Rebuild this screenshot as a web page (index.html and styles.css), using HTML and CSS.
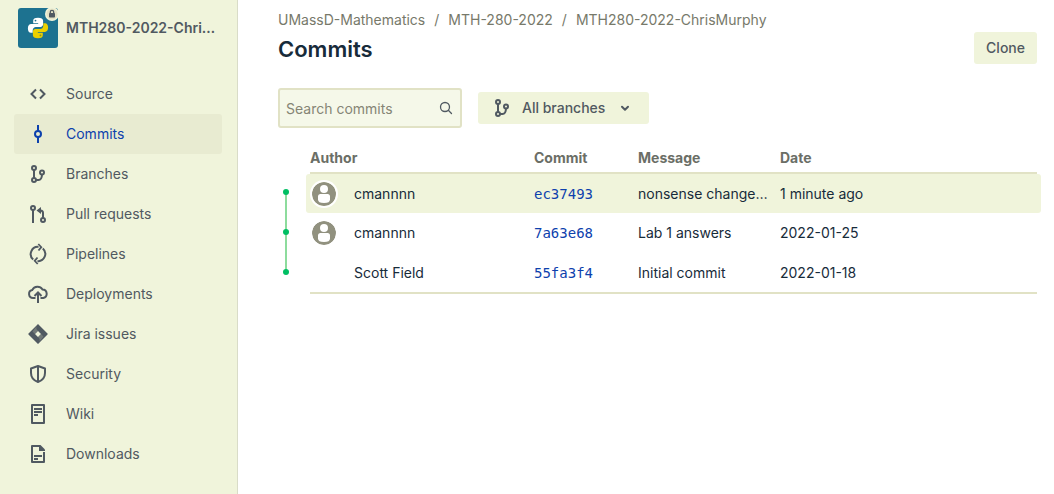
FILE: index.html
```html
<!DOCTYPE html>
<html lang="en">
<head>
<meta charset="utf-8">
<meta name="viewport" content="width=device-width, initial-scale=1">
<title>Commits</title>
<link rel="stylesheet" href="styles.css">
</head>
<body>
<svg class="defs" aria-hidden="true">
  <symbol id="branch" viewBox="0 0 24 24">
    <g fill="none" stroke="currentColor" stroke-width="2"><circle cx="8" cy="6" r="2"/><circle cx="8" cy="18" r="2"/><circle cx="16" cy="10.500" r="2"/><path d="M8 8v8M10 18h2.500q3.300 0 3.500-5.500"/></g>
  </symbol>
  <symbol id="person" viewBox="0 0 24 24">
    <circle cx="12" cy="12" r="12" fill="#91917f"/><circle cx="12" cy="7" r="4" fill="#fff"/><path d="M6 14.500Q6 12 8.500 12h7q2.500 0 2.500 2.500v3Q18 21 12 21T6 17.500z" fill="#fff"/>
  </symbol>
</svg>
<div class="app">
  <aside class="sidebar">
    <a class="repo" href="#">
      <span class="avatar">
        <svg class="avatar-art" viewBox="0 0 40 40" aria-hidden="true">
          <rect width="40" height="40" rx="3" fill="#1d7290"/>
          <path fill="#fff" d="M20 9.800c-3.500 0-4.800 1.200-4.800 3v2.400h5v.9h-7c-2.100 0-3.300 1.600-3.300 4.300s1.200 4.300 3 4.300h1.800v-2.500c0-2 1.500-3.300 3.200-3.300h4.600c1.500 0 2.600-1.200 2.600-2.600v-3.500c0-2-1.800-3-5.100-3z"/>
          <path fill="#ecd000" d="M20 30.200c3.500 0 4.800-1.200 4.800-3v-2.400h-5v-.9h7c2.100 0 3.300-1.600 3.300-4.300s-1.200-4.300-3-4.300h-1.800v2.500c0 2-1.500 3.300-3.200 3.300h-4.600c-1.500 0-2.600 1.200-2.600 2.600v3.500c0 2 1.800 3 5.100 3z"/>
          <circle cx="17.500" cy="12.600" r=".9" fill="#1d7290"/><circle cx="22.500" cy="27.400" r=".9" fill="#8c8f26"/>
        </svg>
        <svg class="lock" viewBox="0 0 14 14" aria-hidden="true"><circle cx="7" cy="7" r="7" fill="#f0f4db"/><circle cx="7" cy="7" r="5.500" fill="#e3e2c5"/><rect x="4" y="6" width="6" height="4.500" rx=".8" fill="#505961"/><path d="M5.300 6.500V5a1.700 1.700 0 0 1 3.400 0v1.500" fill="none" stroke="#505961" stroke-width="1.300"/></svg>
      </span>
      <span class="repo-name">MTH280-2022-Chri…</span>
    </a>
    <nav class="nav" aria-label="Repository">
      <a class="nav-item" href="#"><svg class="icon" viewBox="0 0 24 24"><path d="m10 7.500-4.500 4.500 4.500 4.500M14 7.500l4.500 4.500-4.500 4.500" fill="none" stroke="currentColor" stroke-width="2"/></svg>Source</a>
      <a class="nav-item active" href="#" aria-current="page"><svg class="icon" viewBox="0 0 24 24"><g fill="none" stroke="currentColor" stroke-width="2"><circle cx="12" cy="12" r="3"/><path d="M12 3v6M12 15v6"/></g></svg>Commits</a>
      <a class="nav-item" href="#"><svg class="icon"><use href="#branch"/></svg>Branches</a>
      <a class="nav-item" href="#"><svg class="icon" viewBox="0 0 24 24"><g fill="none" stroke="currentColor" stroke-width="2"><circle cx="7" cy="6" r="2"/><circle cx="17" cy="18" r="2"/><path d="M7 8v13M17 16v-5q0-2.500-2.500-2.500H12.500"/></g><path d="M10.500 8.500 15 5v7z" fill="currentColor"/></svg>Pull requests</a>
      <a class="nav-item" href="#"><svg class="icon" viewBox="0 0 24 24"><path d="M7.200 17.500A7.200 7.200 0 0 1 12.500 4.900M16.800 6.500A7.200 7.200 0 0 1 11.500 19.100" fill="none" stroke="currentColor" stroke-width="2"/><path d="M12.300 2 15.300 5.200 12.500 8.500M11.700 22 8.700 18.800 11.500 15.500" fill="none" stroke="currentColor" stroke-width="1.800"/></svg>Pipelines</a>
      <a class="nav-item" href="#"><svg class="icon" viewBox="0 0 24 24"><path d="M9.500 16H7a4 4 0 0 1-.8-7.900A6 6 0 0 1 16.500 7.500a4.300 4.300 0 0 1 .8 8.500H14.500M12 21v-9.500M8.500 14l3.500-3.500 3.500 3.500" fill="none" stroke="currentColor" stroke-width="2"/></svg>Deployments</a>
      <a class="nav-item" href="#"><svg class="icon" viewBox="0 0 24 24"><path fill="currentColor" fill-rule="evenodd" d="m12 2 9.500 9.500q.5.500 0 1L12 22l-9.500-9.500q-.5-.5 0-1zm0 7-3 3 3 3 3-3z"/><path d="M12 2.500Q8.500 6 12 9l-3 3-2.500-2.500zM12 21.500q3.500-3.500 0-6.500l3-3 2.500 2.500z" fill="#a5aa9b" opacity=".4"/></svg>Jira issues</a>
      <a class="nav-item" href="#"><svg class="icon" viewBox="0 0 24 24"><path d="M12 4 19 6.500V11q0 6.500-7 9-7-2.500-7-9V6.500zM12 4v16" fill="none" stroke="currentColor" stroke-width="2" stroke-linejoin="round"/></svg>Security</a>
      <a class="nav-item" href="#"><svg class="icon" viewBox="0 0 24 24"><path d="M6 3h12v18H6zM8 7h8M8 10h8M8 13h4" fill="none" stroke="currentColor" stroke-width="2" stroke-linejoin="round"/></svg>Wiki</a>
      <a class="nav-item" href="#"><svg class="icon" viewBox="0 0 24 24"><path d="M13 4H6v16h12V10M8 14h8M8 17h4" fill="none" stroke="currentColor" stroke-width="2" stroke-linejoin="round"/><path d="M13 3h1.500L19 7.500V9h-6z" fill="currentColor"/></svg>Downloads</a>
    </nav>
  </aside>
  <main class="main">
    <nav class="crumbs" aria-label="Breadcrumb"><a href="#">UMassD-Mathematics</a><span>/</span><a href="#">MTH-280-2022</a><span>/</span><a href="#">MTH280-2022-ChrisMurphy</a></nav>
    <header class="heading">
      <h1>Commits</h1>
      <button class="button" type="button">Clone</button>
    </header>
    <div class="filters">
      <label class="search"><input type="text" placeholder="Search commits" aria-label="Search commits"><svg class="search-icon" viewBox="0 0 16 16" aria-hidden="true"><g fill="none" stroke="#505961" stroke-width="1.300"><circle cx="7" cy="7" r="4.500"/><path d="m10.300 10.300 3.200 3.200" stroke-linecap="round"/></g></svg></label>
      <button class="button branches" type="button"><svg class="icon"><use href="#branch"/></svg>All branches<svg class="chevron" viewBox="0 0 16 16"><path d="m5 6.800 3 3 3-3" fill="none" stroke="currentColor" stroke-width="2" stroke-linecap="round" stroke-linejoin="round"/></svg></button>
    </div>
    <div class="history">
      <svg class="graph" viewBox="0 0 16 88" aria-hidden="true"><path d="M8 4v80" stroke="#8ddc9d" stroke-width="2"/><g fill="#00bf63"><circle cx="8" cy="4" r="3"/><circle cx="8" cy="44" r="3"/><circle cx="8" cy="84" r="3"/></g></svg>
      <table class="commits">
        <colgroup><col class="col-author"><col class="col-commit"><col class="col-message"><col></colgroup>
        <thead><tr><th scope="col">Author</th><th scope="col">Commit</th><th scope="col">Message</th><th scope="col">Date</th></tr></thead>
        <tbody>
          <tr class="selected"><td><div class="author"><svg class="user ring"><use href="#person"/></svg>cmannnn</div></td><td><a class="hash" href="#">ec37493</a></td><td>nonsense change…</td><td>1 minute ago</td></tr>
          <tr><td><div class="author"><svg class="user"><use href="#person"/></svg>cmannnn</div></td><td><a class="hash" href="#">7a63e68</a></td><td>Lab 1 answers</td><td>2022-01-25</td></tr>
          <tr><td><div class="author"><span class="user"></span>Scott Field</div></td><td><a class="hash" href="#">55fa3f4</a></td><td>Initial commit</td><td>2022-01-18</td></tr>
        </tbody>
      </table>
    </div>
  </main>
</div>
</body>
</html>
```
FILE: styles.css
```css
* { box-sizing: border-box; }
body { margin: 0; background: #fff; color: #172b3a; font: 14px/20px Inter, "Liberation Sans", sans-serif; }
a { text-decoration: none; color: inherit; }
.defs { position: absolute; width: 0; height: 0; }
.app { display: flex; min-height: 100vh; }
.icon { width: 24px; height: 24px; flex: none; }

.sidebar { width: 238px; flex: none; padding: 8px 14px; background: #f0f4db; border-right: 1px solid #d9dcc8; color: #505961; }
.repo { display: flex; align-items: center; gap: 8px; padding-left: 4px; font-weight: 600; }
.avatar { position: relative; width: 40px; height: 40px; flex: none; }
.avatar-art { display: block; width: 40px; height: 40px; }
.lock { position: absolute; top: -1px; right: -1px; width: 14px; height: 14px; }
.repo-name { white-space: nowrap; }
.nav { display: flex; flex-direction: column; margin-top: 26px; }
.nav-item { display: flex; align-items: center; gap: 16px; height: 40px; margin-right: 1px; padding: 0 12px; border-radius: 3px; }
.active { background: #e8ebd1; color: #0d41ad; }

.main { flex: 1; min-width: 0; padding: 10px 17px 24px 40px; }
.crumbs { display: flex; gap: 9px; color: #77796a; }
.heading { display: flex; justify-content: space-between; align-items: center; margin-top: 2px; }
h1 { margin: 0; padding-top: 2px; font-size: 22px; line-height: 30px; font-weight: 600; }
.button { height: 32px; padding: 0 12px; border: 0; border-radius: 3px; background: #f0f4db; color: #505961; font: inherit; font-weight: 500; }
.filters { display: flex; align-items: center; gap: 16px; margin-top: 24px; }
.search { display: flex; align-items: center; width: 184px; height: 40px; padding: 0 6px; border: 2px solid #e1e2c5; border-radius: 3px; background: #f5f8e9; }
.search input { flex: 1; min-width: 0; padding: 2px 0 0; border: 0; outline: 0; background: none; color: inherit; font: inherit; }
.search input::placeholder { color: #858575; opacity: 1; }
.search-icon { width: 16px; height: 16px; }
.branches { display: flex; align-items: center; gap: 8px; }
.chevron { width: 16px; height: 16px; margin: 0 4px; }

.history { display: flex; align-items: flex-start; gap: 16px; margin-top: 20px; }
.graph { width: 16px; height: 88px; margin-top: 40px; flex: none; }
.commits { flex: 1; min-width: 0; table-layout: fixed; border-collapse: separate; border-spacing: 0; }
.col-author { width: 224px; }
.col-commit { width: 104px; }
.col-message { width: 142px; }
th { height: 26px; padding: 0 0 4px; border-bottom: 2px solid #e1e2c5; color: #6b6e66; font-weight: 700; line-height: 20px; text-align: left; }
td { height: 40px; padding: 0; white-space: nowrap; }
.author { display: flex; align-items: center; gap: 16px; padding-left: 2px; }
.user { width: 24px; height: 24px; margin-right: 2px; flex: none; border-radius: 50%; }
.ring { box-shadow: 0 0 0 2px #fff; }
.selected td { height: 39px; background: #f0f4db; }
.selected td:first-child { border-radius: 3px 0 0 3px; box-shadow: -4px 0 #f0f4db; }
.selected td:last-child { border-radius: 0 3px 3px 0; box-shadow: 4px 0 #f0f4db; }
tbody tr:last-child td { height: 41px; border-bottom: 2px solid #e1e2c5; }
.hash { color: #0d41ad; font-family: "DejaVu Sans Mono", monospace; }
```
